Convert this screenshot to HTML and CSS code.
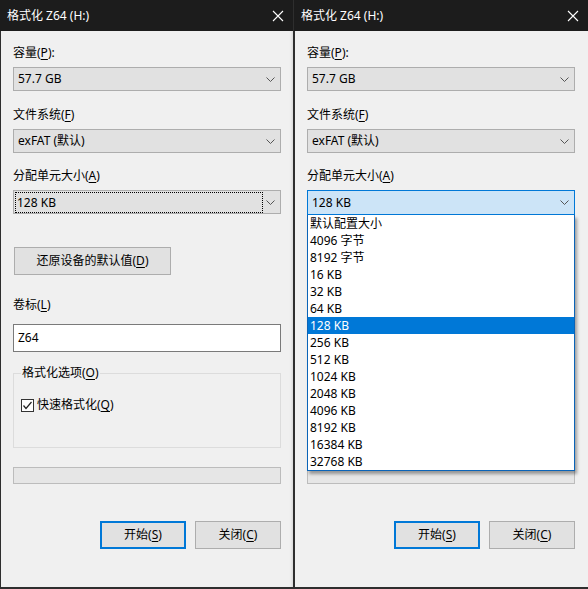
FILE: index.html
```html
<!DOCTYPE html>
<html lang="zh-CN">
<head>
<meta charset="utf-8">
<title>格式化 Z64 (H:)</title>
<link rel="stylesheet" href="styles.css">
</head>
<body>
<div class="screen">
  <div class="window left">
    <div class="titlebar">
      <span class="title">格式化 Z64 (H:)</span>
      <svg class="close" width="12" height="12" viewBox="0 0 12 12"><path d="M1 1 L11 11 M11 1 L1 11" stroke="#fff" stroke-width="1.1" fill="none"/></svg>
    </div>
    <div class="body">
      <div class="label first">容量(<u>P</u>):</div>
      <div class="combo"><span class="value">57.7 GB</span><svg class="chev" width="9" height="5" viewBox="0 0 9 5"><path d="M0.5 0.5 L4.5 4.5 L8.5 0.5" stroke="#555" fill="none"/></svg></div>
      <div class="label">文件系统(<u>F</u>)</div>
      <div class="combo"><span class="value">exFAT (默认)</span><svg class="chev" width="9" height="5" viewBox="0 0 9 5"><path d="M0.5 0.5 L4.5 4.5 L8.5 0.5" stroke="#555" fill="none"/></svg></div>
      <div class="label third">分配单元大小(<u>A</u>)</div>
      <div class="combo focused"><span class="value dotted">128 KB</span><svg class="chev" width="9" height="5" viewBox="0 0 9 5"><path d="M0.5 0.5 L4.5 4.5 L8.5 0.5" stroke="#555" fill="none"/></svg></div>
      <div class="restore-row"><button class="btn restore">还原设备的默认值(<u>D</u>)</button></div>
      <div class="label vol">卷标(<u>L</u>)</div>
      <div class="textbox">Z64</div>
      <fieldset class="group">
        <legend>格式化选项(<u>O</u>)</legend>
        <div class="check-row"><span class="checkbox"><svg width="11" height="11" viewBox="0 0 11 11"><path d="M1.5 5.5 L4 8.5 L9.5 2" stroke="#222" stroke-width="1.2" fill="none"/></svg></span><span>快速格式化(<u>Q</u>)</span></div>
      </fieldset>
      <div class="progress"></div>
      <div class="actions">
        <button class="btn primary">开始(<u>S</u>)</button>
        <button class="btn">关闭(<u>C</u>)</button>
      </div>
    </div>
  </div>
  <div class="window right">
    <div class="titlebar">
      <span class="title">格式化 Z64 (H:)</span>
      <svg class="close" width="12" height="12" viewBox="0 0 12 12"><path d="M1 1 L11 11 M11 1 L1 11" stroke="#fff" stroke-width="1.1" fill="none"/></svg>
    </div>
    <div class="body">
      <div class="label first">容量(<u>P</u>):</div>
      <div class="combo"><span class="value">57.7 GB</span><svg class="chev" width="9" height="5" viewBox="0 0 9 5"><path d="M0.5 0.5 L4.5 4.5 L8.5 0.5" stroke="#555" fill="none"/></svg></div>
      <div class="label">文件系统(<u>F</u>)</div>
      <div class="combo"><span class="value">exFAT (默认)</span><svg class="chev" width="9" height="5" viewBox="0 0 9 5"><path d="M0.5 0.5 L4.5 4.5 L8.5 0.5" stroke="#555" fill="none"/></svg></div>
      <div class="label third">分配单元大小(<u>A</u>)</div>
      <div class="combo-wrap">
        <div class="combo open"><span class="value">128 KB</span><svg class="chev" width="9" height="5" viewBox="0 0 9 5"><path d="M0.5 0.5 L4.5 4.5 L8.5 0.5" stroke="#555" fill="none"/></svg></div>
        <ul class="list">
          <li>默认配置大小</li>
          <li>4096 字节</li>
          <li>8192 字节</li>
          <li>16 KB</li>
          <li>32 KB</li>
          <li>64 KB</li>
          <li class="sel">128 KB</li>
          <li>256 KB</li>
          <li>512 KB</li>
          <li>1024 KB</li>
          <li>2048 KB</li>
          <li>4096 KB</li>
          <li>8192 KB</li>
          <li>16384 KB</li>
          <li>32768 KB</li>
        </ul>
      </div>
      <div class="restore-row covered"><button class="btn restore">还原设备的默认值(<u>D</u>)</button></div>
      <div class="label vol covered">卷标(<u>L</u>)</div>
      <div class="textbox covered">Z64</div>
      <fieldset class="group covered">
        <legend>格式化选项(<u>O</u>)</legend>
        <div class="check-row"><span class="checkbox"><svg width="11" height="11" viewBox="0 0 11 11"><path d="M1.5 5.5 L4 8.5 L9.5 2" stroke="#222" stroke-width="1.2" fill="none"/></svg></span><span>快速格式化(<u>Q</u>)</span></div>
      </fieldset>
      <div class="progress"></div>
      <div class="actions">
        <button class="btn primary">开始(<u>S</u>)</button>
        <button class="btn">关闭(<u>C</u>)</button>
      </div>
    </div>
  </div>
</div>
</body>
</html>
```

FILE: styles.css
```css
* { box-sizing: border-box; }
html, body { margin: 0; padding: 0; }
body {
  background: #2b2b2b;
  font-family: "Noto Sans", "Noto Sans CJK SC", sans-serif;
  font-size: 12px;
  color: #000;
  width: 588px;
  height: 589px;
  overflow: hidden;
}
u { text-decoration: underline; text-underline-offset: 2px; }
.screen { display: flex; height: 589px; }
.window {
  width: 294px;
  height: 589px;
  background: #f0f0f0;
  border-left: 1px solid #2e2e2e;
  border-bottom: 2px solid #2e2e2e;
  display: flex;
  flex-direction: column;
}
.window.left { border-right: 1px solid #2e2e2e; box-shadow: inset -3px 0 3px -2px rgba(0,0,0,0.12); }
.titlebar {
  height: 31px;
  flex: none;
  background: #1c1c1c;
  color: #fff;
  display: flex;
  align-items: center;
  justify-content: space-between;
  padding: 0 9px 0 7px;
  margin-left: -1px;
}
.title { line-height: 16px; }
.close { display: block; }
.body {
  padding: 14px 0 0 12px;
  flex: 1;
  display: flex;
  flex-direction: column;
}
.left .body { padding-right: 11px; }
.right .body { padding-right: 12px; }
.label { line-height: 16px; height: 16px; margin-top: 16px; margin-bottom: 6px; }
.label.first { margin-top: 0; }
.label.third { margin-top: 15px; margin-bottom: 6px; }
.combo {
  width: 268px;
  height: 24px;
  flex: none;
  background: #e1e1e1;
  border: 1px solid #adadad;
  display: flex;
  align-items: center;
  justify-content: space-between;
  padding: 0 5px 0 4px;
}
.combo .value { line-height: 16px; }
.combo.focused { padding-left: 2px; }
.value.dotted {
  outline: 1px dotted #000;
  width: 246px;
  height: 19px;
  line-height: 19px;
  padding-left: 1px;
}
.combo.open { background: #cce4f7; border-color: #0078d7; height: 25px; }
.combo-wrap { position: relative; width: 268px; height: 24px; flex: none; }
.list {
  position: absolute;
  left: 0;
  top: 25px;
  width: 268px;
  margin: 0;
  padding: 0;
  list-style: none;
  background: #fff;
  border: 1px solid #0a64b8;
  border-top: none;
  box-shadow: 2px 3px 3px rgba(0,0,0,0.35);
  z-index: 5;
}
.list li { height: 17px; line-height: 17px; padding-left: 2px; }
.list li.sel { background: #0078d7; color: #fff; }
.restore-row { margin-top: 33px; }
.btn {
  font: inherit;
  color: #000;
  background: #e1e1e1;
  border: 1px solid #adadad;
  height: 28px;
  padding: 0;
  margin: 0;
  line-height: 16px;
}
.btn.restore { width: 157px; margin-left: 1px; }
.label.vol { margin-top: 22px; margin-bottom: 11px; }
.textbox {
  width: 268px;
  height: 28px;
  flex: none;
  background: #fff;
  border: 1px solid #7a7a7a;
  padding: 0 4px;
  line-height: 26px;
}
.group {
  margin: 13px 0 0 0;
  width: 268px;
  height: 83px;
  flex: none;
  border: 1px solid #dcdcdc;
  padding: 0 0 0 7px;
}
.group legend { padding: 0 1px; line-height: 16px; }
.check-row { display: flex; align-items: center; margin-top: 16px; line-height: 16px; }
.checkbox {
  width: 13px;
  height: 13px;
  border: 1px solid #333;
  background: #fff;
  margin-right: 3px;
  display: flex;
  align-items: center;
  justify-content: center;
}
.checkbox svg { display: block; }
.covered { visibility: hidden; }
.progress {
  margin-top: 19px;
  width: 268px;
  height: 17px;
  flex: none;
  background: #e6e6e6;
  border: 1px solid #bcbcbc;
}
.actions {
  margin-top: 37px;
  width: 268px;
  display: flex;
  justify-content: flex-end;
  gap: 9px;
}
.actions .btn { width: 86px; }
.btn.primary { border: 2px solid #0078d7; }
```
